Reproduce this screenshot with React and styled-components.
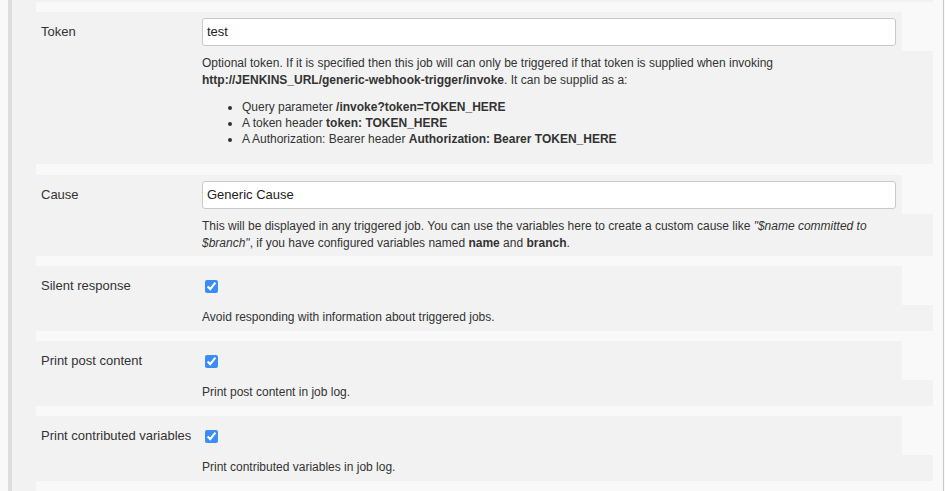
import React from "react";
import styled, { createGlobalStyle } from "styled-components";

const GlobalStyle = createGlobalStyle`
  html, body {
    margin: 0;
    padding: 0;
    background: #f9f9f9;
  }
  body {
    font-family: "Liberation Sans", Arial, Helvetica, sans-serif;
    color: #333;
  }
`;

function App() {
  return (
    <>
      <GlobalStyle />
      <Page>
        <Panel>
          <Gutter />
          <Content>
            <DescRow stub />

            <Section>
              <FieldRow>
                <Label>Token</Label>
                <TextInput defaultValue="test" />
              </FieldRow>
              <DescRow>
                <Para>
                  Optional token. If it is specified then this job will can only be triggered if that
                  token is supplied when invoking{" "}
                  <b>http://JENKINS_URL/generic-webhook-trigger/invoke</b>. It can be supplid as a:
                </Para>
                <List>
                  <li>
                    Query parameter <b>/invoke?token=TOKEN_HERE</b>
                  </li>
                  <li>
                    A token header <b>token: TOKEN_HERE</b>
                  </li>
                  <li>
                    A Authorization: Bearer header <b>Authorization: Bearer TOKEN_HERE</b>
                  </li>
                </List>
              </DescRow>
            </Section>

            <Section gap={11}>
              <FieldRow>
                <Label>Cause</Label>
                <TextInput defaultValue="Generic Cause" />
              </FieldRow>
              <DescRow>
                <Para>
                  This will be displayed in any triggered job. You can use the variables here to
                  create a custom cause like <i>"$name committed to $branch"</i>, if you have
                  configured variables named <b>name</b> and <b>branch</b>.
                </Para>
              </DescRow>
            </Section>

            <CheckSetting
              label="Silent response"
              help="Avoid responding with information about triggered jobs."
            />
            <CheckSetting label="Print post content" help="Print post content in job log." />
            <CheckSetting
              label="Print contributed variables"
              help="Print contributed variables in job log."
            />
          </Content>
        </Panel>
      </Page>
    </>
  );
}

function CheckSetting({ label, help }) {
  return (
    <Section>
      <FieldRow>
        <Label>{label}</Label>
        <Check type="checkbox" defaultChecked />
      </FieldRow>
      <DescRow bottom={5}>
        <Para>{help}</Para>
      </DescRow>
    </Section>
  );
}

const Page = styled.div`
  height: 491px;
  padding: 0 1px 0 8px;
  overflow: hidden;
`;

const Panel = styled.div`
  display: flex;
  height: 100%;
  border-left: 4px solid #dedede;
`;

const Gutter = styled.div`
  width: 24px;
  flex-shrink: 0;
  background: #f2f2f2;
`;

const Content = styled.div`
  flex: 1;
  background: #f9f9f9;
  border-right: 1px solid #c8c8c8;
`;

const Section = styled.div`
  margin-top: ${(p) => p.gap || 10}px;
`;

const FieldRow = styled.div`
  display: flex;
  align-items: center;
  height: 39px;
  margin-right: 41px;
  background: #f2f2f2;
`;

const Label = styled.div`
  width: 161px;
  padding-left: 5px;
  flex-shrink: 0;
  font-size: 13px;
  color: #333;
`;

const TextInput = styled.input`
  flex: 1;
  margin-right: 6px;
  height: 28px;
  box-sizing: border-box;
  border: 1px solid #c9c9c9;
  border-radius: 3px;
  background: #fff;
  padding: 0 4px;
  font-family: "Liberation Sans", Arial, sans-serif;
  font-size: 13px;
  color: #222;
  outline: none;
`;

const Check = styled.input`
  width: 13px;
  height: 13px;
  margin: 1px 0 0 3px;
  accent-color: #3b8cf5;
`;

const DescRow = styled.div`
  margin-right: 10px;
  background: #f2f2f2;
  padding: ${(p) => (p.stub ? "0" : `4px 20px ${p.bottom || 4}px 166px`)};
  height: ${(p) => (p.stub ? "2px" : "auto")};
  font-size: 12px;
  line-height: 17px;
  color: #333;
`;

const Para = styled.div`
  b {
    font-weight: bold;
  }
`;

const List = styled.ul`
  margin: 10px 0 13px;
  padding-left: 40px;
  line-height: 16px;
`;

export default App;
